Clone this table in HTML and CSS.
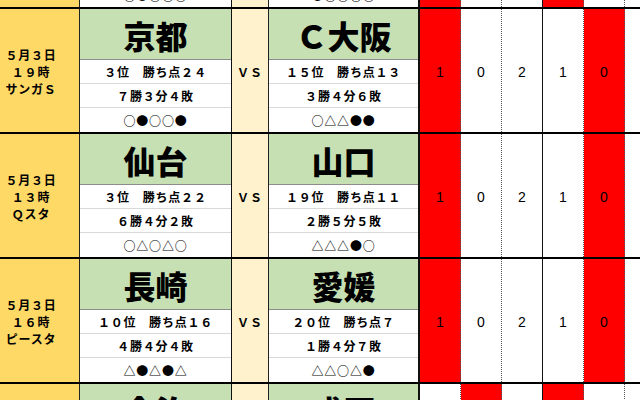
FILE: index.html
```html
<!DOCTYPE html>
<html lang="ja">
<head>
<meta charset="utf-8">
<link rel="stylesheet" href="styles.css">
</head>
<body>
<div class="sheet">
  <div class="table">
    <div class="block">
      <div class="date"></div>
      <div class="team"><div class="name"></div><div class="row"></div><div class="row"></div><div class="row">○●○○○</div></div>
      <div class="vs"></div>
      <div class="team"><div class="name"></div><div class="row"></div><div class="row"></div><div class="row">●○○○○</div></div>
      <div class="num red"></div><div class="num"></div><div class="num major"></div><div class="num red"></div><div class="num"></div><div class="num last"></div>
    </div>
    <div class="block">
      <div class="date"><span>５月３日</span><span>１９時</span><span>サンガＳ</span></div>
      <div class="team"><div class="name">京都</div><div class="row">３位　勝ち点２４</div><div class="row">７勝３分４敗</div><div class="row">○●○○●</div></div>
      <div class="vs">ＶＳ</div>
      <div class="team"><div class="name">Ｃ大阪</div><div class="row">１５位　勝ち点１３</div><div class="row">３勝４分６敗</div><div class="row">○△△●●</div></div>
      <div class="num red">1</div><div class="num">0</div><div class="num major">2</div><div class="num">1</div><div class="num red">0</div><div class="num last"></div>
    </div>
    <div class="block">
      <div class="date"><span>５月３日</span><span>１３時</span><span>Ｑスタ</span></div>
      <div class="team"><div class="name">仙台</div><div class="row">３位　勝ち点２２</div><div class="row">６勝４分２敗</div><div class="row">○△○△○</div></div>
      <div class="vs">ＶＳ</div>
      <div class="team"><div class="name">山口</div><div class="row">１９位　勝ち点１１</div><div class="row">２勝５分５敗</div><div class="row">△△△●○</div></div>
      <div class="num red">1</div><div class="num">0</div><div class="num major">2</div><div class="num">1</div><div class="num red">0</div><div class="num last"></div>
    </div>
    <div class="block">
      <div class="date"><span>５月３日</span><span>１６時</span><span>ピースタ</span></div>
      <div class="team"><div class="name">長崎</div><div class="row">１０位　勝ち点１６</div><div class="row">４勝４分４敗</div><div class="row">△●△●△</div></div>
      <div class="vs">ＶＳ</div>
      <div class="team"><div class="name">愛媛</div><div class="row">２０位　勝ち点７</div><div class="row">１勝４分７敗</div><div class="row">△△○△●</div></div>
      <div class="num red">1</div><div class="num">0</div><div class="num major">2</div><div class="num">1</div><div class="num red">0</div><div class="num last"></div>
    </div>
    <div class="block">
      <div class="date"></div>
      <div class="team"><div class="name">今治</div><div class="row"></div><div class="row"></div><div class="row"></div></div>
      <div class="vs"></div>
      <div class="team"><div class="name">盛岡</div><div class="row"></div><div class="row"></div><div class="row"></div></div>
      <div class="num"></div><div class="num red"></div><div class="num major"></div><div class="num red"></div><div class="num"></div><div class="num last"></div>
    </div>
  </div>
</div>
</body>
</html>
```
FILE: styles.css
```css
html, body {
  margin: 0;
  padding: 0;
  background: #ffffff;
}
.sheet {
  width: 640px;
  height: 400px;
  overflow: hidden;
}
.table {
  margin-top: -118px;
  font-family: "Noto Sans CJK JP", "Liberation Sans", sans-serif;
  color: #000;
}
.block {
  display: grid;
  grid-template-columns: 80px 152px 37px 151px 41px 41px 41px 41px 41px 1fr;
  height: 125px;
  box-sizing: border-box;
  border-top: 2px solid #000;
}
.date {
  background: #ffd966;
  border-right: 1px solid #222;
  display: flex;
  flex-direction: column;
  align-items: center;
  justify-content: center;
  text-align: center;
  font-size: 12px;
  font-weight: 700;
  letter-spacing: 0.8px;
  padding: 2px 17px 0 0;
}
.date span {
  display: block;
  height: 17px;
  line-height: 17px;
  overflow: visible;
}
.vs {
  background: #fff2cc;
  border-right: 1px solid #222;
  display: flex;
  align-items: center;
  justify-content: center;
  font-size: 12px;
  font-weight: 700;
  letter-spacing: 1px;
  padding-top: 2px;
}
.team {
  display: flex;
  flex-direction: column;
  border-right: 1px solid #111;
}
.team:nth-child(4) {
  border-right: 2px solid #111;
}
.name {
  height: 51px;
  box-sizing: border-box;
  background: #c6e0b4;
  border-bottom: 1px solid #8c8c8c;
  display: flex;
  align-items: center;
  justify-content: center;
  font-size: 32px;
  font-weight: 900;
  line-height: 1;
  padding-top: 2px;
}
.row {
  height: 24px;
  box-sizing: border-box;
  border-bottom: 1px solid #d9d9d9;
  display: flex;
  align-items: center;
  justify-content: center;
  font-size: 12px;
  font-weight: 700;
  letter-spacing: 0.8px;
}
.row:last-child {
  border-bottom: none;
}
.num {
  display: flex;
  align-items: center;
  justify-content: center;
  border-right: 1px dotted #555;
  font-family: "Liberation Sans", Arial, sans-serif;
  font-size: 14px;
  padding-top: 2px;
}
.num.major {
  border-right: 1px solid #111;
}
.num.last {
  border-right: none;
}
.red {
  background: #ff0000;
}
```
